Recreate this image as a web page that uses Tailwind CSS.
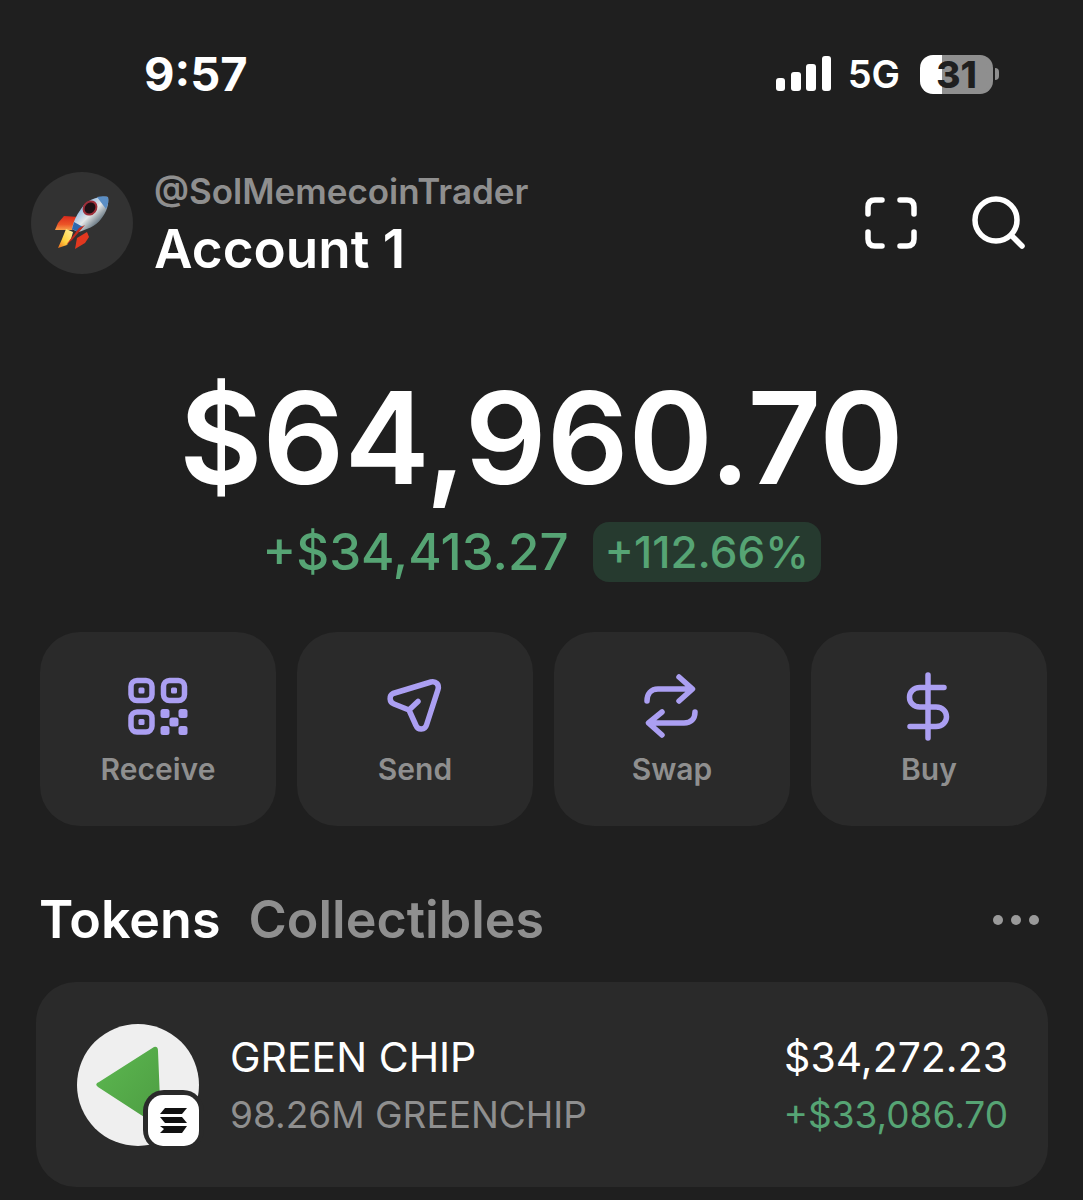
<!DOCTYPE html>
<html lang="en">
  <head>
    <meta charset="UTF-8" />
    <title>Wallet</title>
    <meta name="viewport" content="width=device-width, initial-scale=1.0" />
    <script src="https://cdn.jsdelivr.net/npm/@tailwindcss/browser@4"></script>
  </head>
  <body class="bg-[#1f1f1f] text-white font-['Inter',sans-serif] min-h-screen">
    <!-- Status bar -->
    <div class="flex items-center justify-between pt-[46px] pl-36 pr-21">
      <span class="text-[47px] leading-14 font-bold">9:57</span>
      <div class="flex items-center">
        <svg class="w-14 h-9" viewBox="0 0 56 36" fill="#fff">
          <rect x="0" y="22" width="9" height="13" rx="3" />
          <rect x="15" y="16" width="10" height="19" rx="3" />
          <rect x="30" y="8" width="10" height="27" rx="3" />
          <rect x="46" y="0" width="9" height="35" rx="3" />
        </svg>
        <span class="ml-4 text-[38px] leading-14 font-semibold">5G</span>
        <div class="ml-5 flex items-center">
          <div class="w-[73px] h-[39px] rounded-[13px] bg-linear-to-r from-white from-30% to-[#8f8f8f] to-30% text-[#1f1f1f] text-[37px] leading-[39px] font-extrabold text-center">31</div>
          <div class="ml-0.5 w-1 h-3 rounded-r-full bg-[#8f8f8f]"></div>
        </div>
      </div>
    </div>

    <!-- Header -->
    <header class="flex items-center mt-[63px] pl-[31px] pr-14">
      <div class="w-[102px] h-[102px] shrink-0 rounded-full bg-[#323232] flex items-center justify-center">
        <svg class="w-14 h-14" viewBox="0 0 56 56">
          <defs>
            <linearGradient id="hull" x1="18" y1="12" x2="38" y2="32" gradientUnits="userSpaceOnUse">
              <stop offset="0" stop-color="#4f86c4" />
              <stop offset=".35" stop-color="#a9c6e2" />
              <stop offset=".65" stop-color="#e4e6e6" />
              <stop offset="1" stop-color="#77858f" />
            </linearGradient>
            <linearGradient id="fin" x1="0" y1="0" x2="0" y2="1">
              <stop offset="0" stop-color="#d92a1c" />
              <stop offset=".6" stop-color="#ec5427" />
              <stop offset="1" stop-color="#f6a04a" />
            </linearGradient>
            <linearGradient id="flame" x1="1" y1="0" x2="0" y2="1">
              <stop offset="0" stop-color="#fff0a0" />
              <stop offset=".6" stop-color="#ffd23e" />
              <stop offset="1" stop-color="#ee6a1c" />
            </linearGradient>
          </defs>
          <path d="M10 21L25 22L18 35L1 35L4 28Z" fill="url(#fin)" />
          <path d="M33 37L35 42L31 48L21 54L23 43Z" fill="#e2381f" />
          <path d="M12 34L19 37L17 44L13 50L4 53L8 44Z" fill="url(#flame)" />
          <path d="M54 2C43 1 33 5 27 14C22 21 19 27 18 34L24 37C32 35 42 31 47 24C53 17 55 9 54 2Z" fill="url(#hull)" />
          <path d="M43 2C47 1 51 1 54 2C55 6 54 10 52 14Z" fill="#5b8ec4" />
          <path d="M20 27L29 32L24 37L18 34Z" fill="#2f68ad" />
          <path d="M31 30L18 45L12 50L25 33Z" fill="#c42a1d" />
          <ellipse cx="36" cy="13" rx="7" ry="8" fill="#9d2d38" transform="rotate(40 36 13)" />
          <ellipse cx="36" cy="13" rx="5" ry="6" fill="#1e1014" transform="rotate(40 36 13)" />
        </svg>
      </div>
      <div class="ml-[21px] flex-1">
        <p class="text-[35px] leading-13 font-semibold text-[#8f8f8f]">@SolMemecoinTrader</p>
        <h1 class="text-[53px] leading-16 font-semibold">Account 1</h1>
      </div>
      <button type="button" aria-label="Scan">
        <svg class="w-14 h-14" viewBox="0 0 56 56" fill="none" stroke="#fff" stroke-width="5.5" stroke-linecap="round" stroke-linejoin="round">
          <path d="M5 19V12Q5 5 12 5H19M37 5H44Q51 5 51 12V19M51 37V44Q51 51 44 51H37M19 51H12Q5 51 5 44V37" />
        </svg>
      </button>
      <button type="button" aria-label="Search" class="ml-[52px]">
        <svg class="w-14 h-14" viewBox="0 0 56 56" fill="none" stroke="#fff" stroke-width="5.5" stroke-linecap="round">
          <circle cx="25" cy="25" r="21" />
          <path d="M41 41L51 51" />
        </svg>
      </button>
    </header>

    <!-- Balance -->
    <section class="mt-[77px] text-center">
      <p class="text-[128px] leading-40 font-semibold">$64,960.70</p>
      <div class="mt-1 flex items-center justify-center gap-6 text-[#56a474] font-medium">
        <span class="text-[51px] leading-15">+$34,413.27</span>
        <span class="rounded-2xl bg-[#263a2f] px-3 text-[44px] leading-15">+112.66%</span>
      </div>
    </section>

    <!-- Actions -->
    <nav class="mt-[50px] pl-10 pr-9 grid grid-cols-4 gap-[21px] text-[30px] leading-9 font-semibold text-[#8f8f8f]">
      <button type="button" class="h-[194px] rounded-[40px] bg-[#2a2a2a] flex flex-col items-center justify-center">
        <svg class="w-18 h-18" viewBox="0 0 72 72" fill="none" stroke="#ab9ff2" stroke-width="5.5">
          <rect x="9" y="9.5" width="21" height="20" rx="6" />
          <rect x="41.5" y="9.5" width="21" height="20" rx="6" />
          <rect x="9" y="41" width="21" height="20" rx="6" />
          <g fill="#ab9ff2" stroke="none">
            <rect x="16.5" y="16.5" width="6" height="6" rx="1.5" />
            <rect x="49" y="16.5" width="6" height="6" rx="1.5" />
            <rect x="16.5" y="48" width="6" height="6" rx="1.5" />
            <rect x="38.5" y="38" width="9" height="9" rx="2.5" />
            <rect x="56.5" y="38" width="9" height="9" rx="2.5" />
            <rect x="47.5" y="46.5" width="9" height="9" rx="2.5" />
            <rect x="38.5" y="55" width="9" height="9" rx="2.5" />
            <rect x="56.5" y="55" width="9" height="9" rx="2.5" />
          </g>
        </svg>
        <span class="mt-2">Receive</span>
      </button>
      <button type="button" class="h-[194px] rounded-[40px] bg-[#2a2a2a] flex flex-col items-center justify-center">
        <svg class="w-18 h-18" viewBox="0 0 72 72" fill="none" stroke="#ab9ff2" stroke-width="5.5" stroke-linecap="round" stroke-linejoin="round">
          <path d="M14 22.500L52 11C57 10 60.500 13.500 59 18.500L47.500 54C46 59 39 59.500 37 54.500L30 39L15 33C10 31 10 24.500 14 22.500ZM30 39L39 30.500" />
        </svg>
        <span class="mt-2">Send</span>
      </button>
      <button type="button" class="h-[194px] rounded-[40px] bg-[#2a2a2a] flex flex-col items-center justify-center">
        <svg class="w-18 h-18" viewBox="0 0 72 72" fill="none" stroke="#ab9ff2" stroke-width="5.5" stroke-linecap="round" stroke-linejoin="round">
          <path d="M11 30C11 23 15 18 22 18H56M43 6L56.500 18L43 30" />
          <path d="M59 41C59 48 55 52 48 52H13M26 41L12.500 52L26 64" />
        </svg>
        <span class="mt-2">Swap</span>
      </button>
      <button type="button" class="h-[194px] rounded-[40px] bg-[#2a2a2a] flex flex-col items-center justify-center">
        <svg class="w-18 h-18" viewBox="0 0 72 72" fill="none" stroke="#ab9ff2" stroke-width="5.5" stroke-linecap="round">
          <path d="M35 4V67M51 16.500H27C13 16.500 13 36 27 36H43C57 36 57 55.500 43 55.500H17" />
        </svg>
        <span class="mt-2">Buy</span>
      </button>
    </nav>

    <!-- Tabs -->
    <div class="mt-16 pl-[39px] pr-11 flex items-center text-[52px] leading-15 font-semibold">
      <button type="button">Tokens</button>
      <button type="button" class="ml-7 text-[#8f8f8f]">Collectibles</button>
      <button type="button" aria-label="More" class="ml-auto flex gap-2">
        <span class="size-2.5 rounded-full bg-[#9a9a9a]"></span>
        <span class="size-2.5 rounded-full bg-[#9a9a9a]"></span>
        <span class="size-2.5 rounded-full bg-[#9a9a9a]"></span>
      </button>
    </div>

    <!-- Token list -->
    <main class="mt-8 pl-9 pr-[35px]">
      <a href="#" class="flex items-center h-[205px] px-10 rounded-[40px] bg-[#2a2a2a]">
        <svg class="w-32 h-32 shrink-0" viewBox="0 0 128 128">
          <defs>
            <linearGradient id="chip" x1="0" y1="0" x2="1" y2="1">
              <stop offset="0" stop-color="#5cb850" />
              <stop offset="1" stop-color="#4d9c42" />
            </linearGradient>
          </defs>
          <circle cx="62" cy="64" r="61" fill="#efefef" />
          <path d="M78 26Q82 25 82 30L85 104Q85 107 82 105L22 66Q18 63 23 61Z" fill="url(#chip)" />
          <rect x="67" y="69" width="61" height="61" rx="21" fill="#2a2a2a" />
          <rect x="72" y="74" width="51" height="51" rx="15" fill="#fff" />
          <g fill="#111">
            <path d="M89 87H111L106 93H84Z" />
            <path d="M84 96H106L111 102H89Z" />
            <path d="M84 105H111L106 112H84L88 108Z" />
          </g>
        </svg>
        <div class="ml-[26px] pt-1 flex-1">
          <p class="text-[41px] leading-14">GREEN CHIP</p>
          <p class="text-[37px] leading-15 text-[#8f8f8f]">98.26M GREENCHIP</p>
        </div>
        <div class="pt-1 text-right">
          <p class="text-[41px] leading-14">$34,272.23</p>
          <p class="text-[37px] leading-15 text-[#56a474]">+$33,086.70</p>
        </div>
      </a>
    </main>
  </body>
</html>
